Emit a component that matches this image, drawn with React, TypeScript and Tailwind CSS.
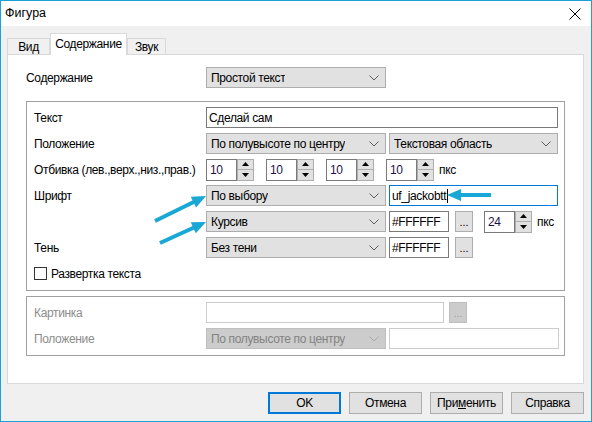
import React from 'react';

const Chevron: React.FC<{ disabled?: boolean }> = ({ disabled }) => (
  <svg width="10" height="6" viewBox="0 0 10 6" className="shrink-0">
    <path d="M0.5 0.5 L5 5 L9.5 0.5" fill="none" stroke={disabled ? '#a8a8a8' : '#606060'} strokeWidth="1" />
  </svg>
);

const Select: React.FC<{ value: string; w: string; disabled?: boolean }> = ({ value, w, disabled }) => (
  <div
    className={`${w} h-[21px] flex items-center justify-between pl-[4px] pr-[6px] border ${
      disabled ? 'bg-[#cccccc] border-[#bfbfbf] text-[#838383]' : 'bg-[#e1e1e1] border-[#adadad] text-black'
    }`}
  >
    <span className="truncate">{value}</span>
    <Chevron disabled={disabled} />
  </div>
);

const Input: React.FC<{ value?: string; w: string; focused?: boolean; disabled?: boolean; caret?: boolean }> = ({
  value,
  w,
  focused,
  disabled,
  caret,
}) => (
  <div
    className={`${w} h-[21px] flex items-center pl-[2px] bg-white border ${
      focused ? 'border-[#0078d7]' : disabled ? 'border-[#cccccc]' : 'border-[#7a7a7a]'
    }`}
  >
    <span>{value}</span>
    {caret && <span className="w-px h-[14px] bg-black ml-px" />}
  </div>
);

const DotsButton: React.FC<{ disabled?: boolean }> = ({ disabled }) => (
  <div
    className={`w-[18px] h-[21px] flex items-end justify-center pb-[3px] border text-[11px] leading-none tracking-normal ${
      disabled ? 'bg-[#cccccc] border-[#bfbfbf] text-[#a0a0a0]' : 'bg-[#e1e1e1] border-[#adadad] text-black'
    }`}
  >
    ...
  </div>
);

const Spinner: React.FC<{ value: string }> = ({ value }) => (
  <div className="flex h-[22px]">
    <div className="w-[31px] h-full flex items-center pl-[3px] bg-white border border-[#7a7a7a] text-[#1e1046]">
      {value}
    </div>
    <div className="w-[17px] h-full flex flex-col">
      <div className="h-[11px] flex items-center justify-center bg-[#e1e1e1] border border-[#adadad]">
        <svg width="7" height="4" viewBox="0 0 7 4"><path d="M3.5 0 L7 4 L0 4 Z" fill="#000" /></svg>
      </div>
      <div className="h-[11px] flex items-center justify-center bg-[#e1e1e1] border border-t-0 border-[#adadad]">
        <svg width="7" height="4" viewBox="0 0 7 4"><path d="M0 0 L7 0 L3.5 4 Z" fill="#000" /></svg>
      </div>
    </div>
  </div>
);

const Row: React.FC<{ label?: string; muted?: boolean; children?: React.ReactNode }> = ({ label, muted, children }) => (
  <div className="flex items-center h-[21px]">
    <div className={`w-[172px] shrink-0 whitespace-nowrap ${muted ? 'text-[#8c8c8c]' : 'text-black'}`}>{label}</div>
    {children}
  </div>
);

const Button: React.FC<{ primary?: boolean; children: React.ReactNode }> = ({ primary, children }) => (
  <div
    className={`w-[73px] h-[22px] flex items-center justify-center bg-[#e1e1e1] ${
      primary ? 'border-2 border-[#0078d7]' : 'border border-[#adadad]'
    }`}
  >
    {children}
  </div>
);

type Pt = [number, number];

const Arrow: React.FC<{ from: Pt; to: Pt }> = ({ from, to }) => {
  const dx = to[0] - from[0];
  const dy = to[1] - from[1];
  const len = Math.hypot(dx, dy);
  const ux = dx / len;
  const uy = dy / len;
  const L = 14;
  const W = 6;
  const bx = to[0] - ux * L;
  const by = to[1] - uy * L;
  const nx = -uy * W;
  const ny = ux * W;
  return (
    <g>
      <line x1={from[0]} y1={from[1]} x2={bx + ux * 2} y2={by + uy * 2} stroke="#19a7d6" strokeWidth="4" />
      <polygon points={`${to[0]},${to[1]} ${bx + nx},${by + ny} ${bx - nx},${by - ny}`} fill="#19a7d6" />
    </g>
  );
};

const App: React.FC = () => {
  return (
    <div className="relative w-[592px] h-[422px] flex flex-col bg-[#f0f0f0] border border-[#1ba1d8] font-['Liberation_Sans',Arial,sans-serif] text-[12px] tracking-[-0.35px] text-black overflow-hidden">
      {/* title bar */}
      <div className="h-[25px] shrink-0 bg-white flex items-center justify-between pl-[4px] pr-[10px]">
        <span className="text-[12.5px] tracking-normal">Фигура</span>
        <svg width="12" height="12" viewBox="0 0 12 12">
          <path d="M0.5 0.5 L11.5 11.5 M11.5 0.5 L0.5 11.5" stroke="#000" strokeWidth="1" />
        </svg>
      </div>

      {/* tabs */}
      <div className="flex items-end h-[21px] mt-[7px] ml-[6px]">
        <div className="w-[43px] h-[16px] flex items-center justify-center bg-[#f0f0f0] border border-b-0 border-[#d9d9d9]">
          Вид
        </div>
        <div className="relative z-10 w-[77px] h-[22px] -mb-px flex items-center justify-center pb-[2px] bg-white border border-b-0 border-[#d9d9d9]">
          Содержание
        </div>
        <div className="w-[39px] h-[16px] flex items-center justify-center bg-[#f0f0f0] border border-b-0 border-[#d9d9d9]">
          Звук
        </div>
      </div>

      {/* panel */}
      <div className="ml-[6px] w-[577px] h-[330px] bg-white border border-[#d9d9d9] pl-[18px] pt-[12px]">
        <div className="flex items-center h-[21px]">
          <div className="w-[180px]">Содержание</div>
          <Select value="Простой текст" w="w-[180px]" />
        </div>

        <div className="mt-[13px] w-[539px] border border-[#a0a0a0] pl-[7px] pt-[5px] pb-[6px] flex flex-col gap-[5px]">
          <Row label="Текст">
            <Input value="Сделай сам" w="w-[352px]" />
          </Row>
          <Row label="Положение">
            <Select value="По полувысоте по центру" w="w-[180px]" />
            <div className="w-[3px]" />
            <Select value="Текстовая область" w="w-[169px]" />
          </Row>
          <Row label="Отбивка (лев.,верх.,низ.,прав.)">
            <div className="flex items-center gap-[12px]">
              <Spinner value="10" />
              <Spinner value="10" />
              <Spinner value="10" />
              <div className="flex items-center gap-[5px]">
                <Spinner value="10" />
                <span>пкс</span>
              </div>
            </div>
          </Row>
          <Row label="Шрифт">
            <Select value="По выбору" w="w-[180px]" />
            <div className="w-[3px]" />
            <Input value="uf_jackobtt" w="w-[169px]" focused caret />
          </Row>
          <Row>
            <Select value="Курсив" w="w-[180px]" />
            <div className="w-[3px]" />
            <Input value="#FFFFFF" w="w-[60px]" />
            <div className="w-[6px]" />
            <DotsButton />
            <div className="w-[11px]" />
            <Spinner value="24" />
            <span className="ml-[5px]">пкс</span>
          </Row>
          <Row label="Тень">
            <Select value="Без тени" w="w-[180px]" />
            <div className="w-[3px]" />
            <Input value="#FFFFFF" w="w-[60px]" />
            <div className="w-[6px]" />
            <DotsButton />
          </Row>
          <div className="flex items-center h-[21px] gap-[4px]">
            <div className="w-[13px] h-[13px] border border-[#333333] bg-white" />
            <span>Развертка текста</span>
          </div>
        </div>

        <div className="mt-[5px] w-[539px] border border-[#a0a0a0] pl-[7px] pt-[5px] pb-[6px] flex flex-col gap-[5px]">
          <Row label="Картинка" muted>
            <Input w="w-[238px]" disabled />
            <div className="w-[5px]" />
            <DotsButton disabled />
          </Row>
          <Row label="Положение" muted>
            <Select value="По полувысоте по центру" w="w-[180px]" disabled />
            <div className="w-[3px]" />
            <Input w="w-[170px]" disabled />
          </Row>
        </div>
      </div>

      {/* buttons */}
      <div className="flex justify-end gap-[8px] pr-[7px] mt-[8px]">
        <Button primary>OK</Button>
        <Button>Отмена</Button>
        <Button>
          <span>
            При<span className="underline">м</span>енить
          </span>
        </Button>
        <Button>Справка</Button>
      </div>

      {/* annotation arrows */}
      <svg className="absolute left-[-1px] top-[-1px] pointer-events-none" width="592" height="422">
        <Arrow from={[155, 221]} to={[206, 196]} />
        <Arrow from={[160, 243]} to={[206, 222]} />
        <Arrow from={[491, 195]} to={[447, 195]} />
      </svg>
    </div>
  );
};

export default App;
